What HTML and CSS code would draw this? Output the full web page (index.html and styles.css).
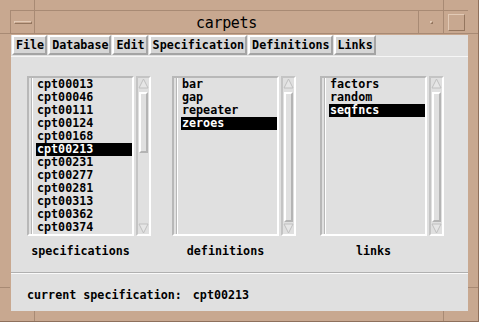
FILE: index.html
```html
<!DOCTYPE html>
<html lang="en">
<head>
    <meta charset="UTF-8">
    <title>carpets</title>
    <link rel="stylesheet" href="styles.css">
</head>
<body>
    <div class="window">
        <!-- title bar -->
        <div class="titlebar">
            <div class="tb-btn menu-btn"><span class="dash"></span></div>
            <div class="title">carpets</div>
            <div class="tb-btn min-btn"><span class="dot"></span></div>
            <div class="tb-btn max-btn"><span class="square"></span></div>
        </div>

        <div class="client">
            <div class="menubar">
                <span class="menu-item">File</span>
                <span class="menu-item">Database</span>
                <span class="menu-item">Edit</span>
                <span class="menu-item">Specification</span>
                <span class="menu-item">Definitions</span>
                <span class="menu-item">Links</span>
            </div>

            <div class="lists">
                <div class="panel panel-spec">
                    <div class="listrow">
                        <ul class="list">
                            <li>cpt00013</li>
                            <li>cpt00046</li>
                            <li>cpt00111</li>
                            <li>cpt00124</li>
                            <li>cpt00168</li>
                            <li class="selected">cpt00213</li>
                            <li>cpt00231</li>
                            <li>cpt00277</li>
                            <li>cpt00281</li>
                            <li>cpt00313</li>
                            <li>cpt00362</li>
                            <li>cpt00374</li>
                        </ul>
                        <div class="scrollbar">
                            <svg class="arrow" width="11" height="11" viewBox="0 0 11 11"><polygon points="5.5,1 10,10 1,10" /></svg>
                            <div class="thumb thumb-short"></div>
                            <svg class="arrow arrow-down" width="11" height="11" viewBox="0 0 11 11"><polygon points="1,1 10,1 5.5,10" /></svg>
                        </div>
                    </div>
                    <div class="label">specifications</div>
                </div>

                <div class="panel panel-defs">
                    <div class="listrow">
                        <ul class="list">
                            <li>bar</li>
                            <li>gap</li>
                            <li>repeater</li>
                            <li class="selected">zeroes</li>
                        </ul>
                        <div class="scrollbar">
                            <svg class="arrow" width="11" height="11" viewBox="0 0 11 11"><polygon points="5.5,1 10,10 1,10" /></svg>
                            <div class="thumb thumb-full"></div>
                            <svg class="arrow arrow-down" width="11" height="11" viewBox="0 0 11 11"><polygon points="1,1 10,1 5.5,10" /></svg>
                        </div>
                    </div>
                    <div class="label">definitions</div>
                </div>

                <div class="panel panel-links">
                    <div class="listrow">
                        <ul class="list">
                            <li>factors</li>
                            <li>random</li>
                            <li class="selected">seqfncs</li>
                        </ul>
                        <div class="scrollbar">
                            <svg class="arrow" width="11" height="11" viewBox="0 0 11 11"><polygon points="5.5,1 10,10 1,10" /></svg>
                            <div class="thumb thumb-full"></div>
                            <svg class="arrow arrow-down" width="11" height="11" viewBox="0 0 11 11"><polygon points="1,1 10,1 5.5,10" /></svg>
                        </div>
                    </div>
                    <div class="label">links</div>
                </div>
            </div>

            <div class="separator"></div>

            <div class="status">current specification:<span class="status-value">cpt00213</span></div>
        </div>
    </div>
</body>
</html>
```

FILE: styles.css
```css
body {
    margin: 0;
    background: #c8a890;
    font-family: "DejaVu Sans Mono", "Liberation Mono", monospace;
    color: #000;
}
.window {
    width: 479px;
    height: 322px;
    box-sizing: border-box;
    padding: 10px 10px 10px 11px;
    display: flex;
    flex-direction: column;
    background-color: #c8a890;
    border-right: 1px solid #8e705c;
    border-bottom: 1px solid #8e705c;
    /* corner notches of the frame */
    background-image:
        linear-gradient(#a88a74, #a88a74),
        linear-gradient(#a88a74, #a88a74),
        linear-gradient(#a88a74, #a88a74),
        linear-gradient(#a88a74, #a88a74),
        linear-gradient(#a88a74, #a88a74),
        linear-gradient(#a88a74, #a88a74),
        linear-gradient(#a88a74, #a88a74),
        linear-gradient(#a88a74, #a88a74);
    background-repeat: no-repeat;
    background-size: 1px 10px, 1px 10px, 1px 11px, 1px 11px, 10px 1px, 10px 1px, 10px 1px, 10px 1px;
    background-position: 34px 0, 443px 0, 34px 311px, 443px 311px, 0 33px, 0 287px, 468px 33px, 468px 287px;
}
.titlebar {
    display: flex;
    height: 22px;
    margin: 0 0 1px -1px;
    border-top: 1px solid #a88a74;
    border-left: 1px solid #a88a74;
    border-bottom: 1px solid #a88a74;
}
.tb-btn {
    display: flex;
    align-items: center;
    justify-content: center;
}
.menu-btn {
    width: 23px;
    border-right: 1px solid #a88a74;
}
.dash {
    width: 16px;
    height: 1px;
    background: #c8a890;
    border-top: 1px solid #e2cab6;
    border-bottom: 1px solid #94765f;
    border-left: 1px solid #e2cab6;
    border-right: 1px solid #94765f;
}
.title {
    flex: 1;
    text-align: center;
    font-size: 15px;
    letter-spacing: -0.3px;
    line-height: 22px;
    padding-top: 1px;
}
.min-btn {
    width: 24px;
    border-left: 1px solid #a88a74;
    border-right: 1px solid #a88a74;
}
.dot {
    width: 1px;
    height: 1px;
    background: #c8a890;
    border-top: 1px solid #e2cab6;
    border-left: 1px solid #e2cab6;
    border-bottom: 1px solid #94765f;
    border-right: 1px solid #94765f;
}
.max-btn {
    width: 24px;
}
.square {
    width: 15px;
    height: 15px;
    border-top: 1px solid #e2cab6;
    border-left: 1px solid #e2cab6;
    border-bottom: 1px solid #94765f;
    border-right: 1px solid #94765f;
}
.client {
    flex: 1;
    background: #e0e0e0;
    display: flex;
    flex-direction: column;
    font-weight: bold;
    font-size: 11.7px;
}
.menubar {
    display: flex;
    gap: 1px;
    height: 21px;
    padding: 0 1px;
    border-bottom: 1px solid #f6f6f6;
    align-items: flex-start;
}
.menu-item {
    height: 20px;
    box-sizing: border-box;
    border: 2px solid;
    border-color: #fff #a4a4a4 #a4a4a4 #fff;
    background: #d6d6d6;
    padding: 0 1px 0 2px;
    line-height: 16px;
}
.lists {
    display: flex;
    padding: 19px 0 0 16px;
}
.panel-defs {
    margin-left: 21px;
}
.panel-links {
    margin-left: 24px;
}
.listrow {
    display: flex;
    gap: 2px;
    height: 160px;
}
.list {
    width: 107px;
    box-sizing: border-box;
    margin: 0;
    padding: 0 0 0 7px;
    list-style: none;
    border: 2px solid;
    border-color: #b8b8b8 #fff #fff #b8b8b8;
    box-shadow: inset 2px 0 0 #e0e0e0, inset 3px 0 0 #b8b8b8, inset 4px 0 0 #fff;
}
.list li {
    height: 13px;
    line-height: 13px;
    padding-left: 1px;
    white-space: nowrap;
}
.list li.selected {
    background: #000;
    color: #fff;
}
.scrollbar {
    width: 15px;
    box-sizing: border-box;
    border: 2px solid;
    border-color: #c4c4c4 #fff #fff #c4c4c4;
    display: flex;
    flex-direction: column;
}
.arrow polygon {
    fill: #e6e6e6;
    stroke: #c0c0c0;
    stroke-width: 1;
}
.arrow-down {
    margin-top: auto;
}
.thumb {
    margin: 3px 1px 0 1px;
    box-sizing: border-box;
    border: 2px solid;
    border-color: #fff #b4b4b4 #b4b4b4 #fff;
}
.thumb-short {
    height: 61px;
}
.thumb-full {
    height: 130px;
}
.label {
    width: 107px;
    text-align: center;
    margin-top: 8px;
    line-height: 14px;
}
.separator {
    height: 1px;
    margin-top: 14px;
    background: #b0b0b0;
    border-bottom: 1px solid #fafafa;
}
.status {
    padding: 14px 0 0 16px;
    line-height: 14px;
    white-space: pre;
}
.status-value {
    margin-left: 11px;
}
```
